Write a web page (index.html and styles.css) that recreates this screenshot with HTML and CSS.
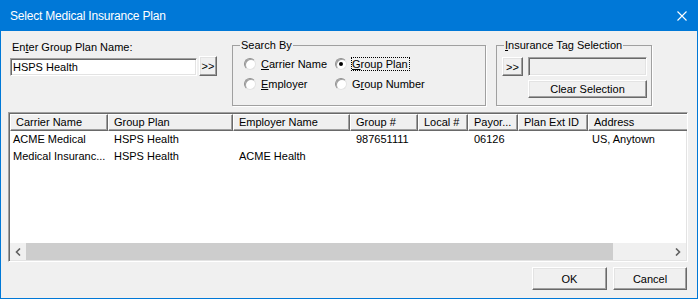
FILE: index.html
```html
<!DOCTYPE html>
<html lang="en">
<head>
    <meta charset="UTF-8">
    <title>Select Medical Insurance Plan</title>
    <link rel="stylesheet" href="styles.css">
</head>
<body>
    <div class="window">
        <div class="titlebar">
            <span class="title">Select Medical Insurance Plan</span>
            <svg class="close" width="10" height="10" viewBox="0 0 10 10">
                <path d="M0.5 0.5 L9.5 9.5 M9.5 0.5 L0.5 9.5" stroke="#fff" stroke-width="1.1" fill="none"/>
            </svg>
        </div>

        <div class="content">
            <!-- top controls -->
            <div class="top">
                <div class="plan">
                    <div class="label">En<u>t</u>er Group Plan Name:</div>
                    <div class="plan-row">
                        <div class="textbox plan-input">HSPS Health</div>
                        <div class="btn btn-go">&gt;&gt;</div>
                    </div>
                </div>

                <fieldset class="group search">
                    <legend>Search By</legend>
                    <div class="radios">
                        <div class="radio"><span class="circle"></span><span class="text"><u>C</u>arrier Name</span></div>
                        <div class="radio"><span class="circle checked"></span><span class="text focus"><u>G</u>roup Plan</span></div>
                        <div class="radio"><span class="circle"></span><span class="text"><u>E</u>mployer</span></div>
                        <div class="radio"><span class="circle"></span><span class="text">G<u>r</u>oup Number</span></div>
                    </div>
                </fieldset>

                <fieldset class="group tags">
                    <legend><u>I</u>nsurance Tag Selection</legend>
                    <div class="tag-grid">
                        <div class="btn btn-tag">&gt;&gt;</div>
                        <div class="textbox disabled"></div>
                        <div class="btn btn-clear">Clear Selection</div>
                    </div>
                </fieldset>
            </div>

            <!-- results list -->
            <div class="list">
                <div class="row header">
                    <div class="cell c1">Carrier Name</div>
                    <div class="cell c2">Group Plan</div>
                    <div class="cell c3">Employer Name</div>
                    <div class="cell c4">Group #</div>
                    <div class="cell c5">Local #</div>
                    <div class="cell c6">Payor...</div>
                    <div class="cell c7">Plan Ext ID</div>
                    <div class="cell c8">Address</div>
                </div>
                <div class="rows">
                    <div class="row item">
                        <div class="cell c1">ACME Medical</div>
                        <div class="cell c2">HSPS Health</div>
                        <div class="cell c3"></div>
                        <div class="cell c4">987651111</div>
                        <div class="cell c5"></div>
                        <div class="cell c6">06126</div>
                        <div class="cell c7"></div>
                        <div class="cell c8">US, Anytown</div>
                    </div>
                    <div class="row item">
                        <div class="cell c1">Medical Insuranc...</div>
                        <div class="cell c2">HSPS Health</div>
                        <div class="cell c3">ACME Health</div>
                        <div class="cell c4"></div>
                        <div class="cell c5"></div>
                        <div class="cell c6"></div>
                        <div class="cell c7"></div>
                        <div class="cell c8"></div>
                    </div>
                </div>
                <div class="hscroll">
                    <div class="arrow">
                        <svg width="6" height="8" viewBox="0 0 6 8"><path d="M5 0.5 L1.5 4 L5 7.5" stroke="#606060" stroke-width="1.6" fill="none"/></svg>
                    </div>
                    <div class="thumb"></div>
                    <div class="track"></div>
                    <div class="arrow">
                        <svg width="6" height="8" viewBox="0 0 6 8"><path d="M1 0.5 L4.5 4 L1 7.5" stroke="#606060" stroke-width="1.6" fill="none"/></svg>
                    </div>
                </div>
            </div>

            <div class="footer">
                <div class="btn btn-ok">OK</div>
                <div class="btn btn-cancel">Cancel</div>
            </div>
        </div>
    </div>
</body>
</html>
```

FILE: styles.css
```css
body {
    margin: 0;
    background-color: #f0f0f0;
    font-family: 'Liberation Sans', Arial, sans-serif;
    font-size: 11px;
    color: #000;
}

.window {
    width: 698px;
    height: 299px;
    box-sizing: border-box;
    border: 1px solid #0078d7;
    border-top: none;
    background-color: #f0f0f0;
    display: flex;
    flex-direction: column;
}

.titlebar {
    height: 31px;
    flex: none;
    background-color: #0078d7;
    color: #fff;
    display: flex;
    align-items: center;
    justify-content: space-between;
    padding: 0 10px 0 9px;
    font-size: 12px;
    letter-spacing: -0.2px;
}

.close {
    display: block;
}

.content {
    flex: 1;
    display: flex;
    flex-direction: column;
    padding: 0 9px 0 7px;
}

/* shared 3d look */
.btn {
    box-sizing: border-box;
    background-color: #f0f0f0;
    border: 1px solid;
    border-color: #fff #696969 #696969 #fff;
    box-shadow: inset -1px -1px #a0a0a0, inset 1px 1px #e3e3e3;
    display: flex;
    align-items: center;
    justify-content: center;
    line-height: 12px;
}

.textbox {
    box-sizing: border-box;
    background-color: #fff;
    border: 1px solid;
    border-color: #a0a0a0 #fff #fff #a0a0a0;
    box-shadow: inset 1px 1px #696969, inset -1px -1px #e3e3e3;
    padding: 0 0 0 2px;
    line-height: 16px;
}

.textbox.disabled {
    background-color: #f0f0f0;
}

.top {
    height: 81px;
    flex: none;
    display: flex;
    align-items: flex-start;
}

.plan {
    margin: 9px 0 0 2px;
}

.label {
    line-height: 14px;
    padding-left: 2px;
}

.plan-row {
    display: flex;
    align-items: flex-end;
    margin-top: 2px;
}

.plan-input {
    width: 187px;
    height: 18px;
    margin-right: 2px;
}

.btn-go {
    width: 18px;
    height: 20px;
}

.group {
    box-sizing: border-box;
    margin: 7px 0 0 0;
    padding: 0;
    min-width: 0;
    height: 68px;
    border: 1px solid #a0a0a0;
    box-shadow: 1px 1px 0 #fff;
}

.group legend {
    margin-left: 7px;
    padding: 0 1px;
    line-height: 14px;
}

.search {
    width: 254px;
    margin-left: 15px;
}

.tags {
    width: 156px;
    margin-left: 10px;
}

.radios {
    display: grid;
    grid-template-columns: 91px 1fr;
    grid-auto-rows: 20px;
    margin: 2px 0 0 11px;
}

.radio {
    display: flex;
    align-items: center;
}

.circle {
    box-sizing: border-box;
    width: 12px;
    height: 12px;
    border-radius: 50%;
    background-color: #fff;
    border: 1px solid;
    border-color: #8f8f8f #e3e3e3 #e3e3e3 #8f8f8f;
    box-shadow: inset 1px 1px #a0a0a0;
    margin-right: 4px;
    display: flex;
    align-items: center;
    justify-content: center;
}

.circle.checked::after {
    content: '';
    width: 4px;
    height: 4px;
    border-radius: 50%;
    background-color: #000;
}

.radio .text {
    border: 1px dotted transparent;
    line-height: 12px;
    padding-right: 1px;
}

.radio .text.focus {
    border-color: #000;
}

.tag-grid {
    display: grid;
    grid-template-columns: 21px 119px;
    grid-template-rows: 19px 18px;
    column-gap: 5px;
    row-gap: 4px;
    margin: 5px 0 0 5px;
}

.btn-clear {
    grid-column: 2;
}

/* list view */
.list {
    box-sizing: border-box;
    height: 150px;
    flex: none;
    background-color: #fff;
    border: 1px solid;
    border-color: #a0a0a0 #fff #fff #a0a0a0;
    box-shadow: inset 1px 1px #696969, inset -1px -1px #e3e3e3;
    padding: 1px;
    display: flex;
    flex-direction: column;
    overflow: hidden;
}

.row {
    display: flex;
    white-space: nowrap;
}

.cell {
    box-sizing: border-box;
    flex: none;
    overflow: hidden;
    padding-left: 6px;
}

.header {
    height: 17px;
    flex: none;
}

.header .cell {
    background-color: #f0f0f0;
    border-top: 1px solid #fff;
    border-left: 1px solid #fff;
    border-right: 1px solid #696969;
    border-bottom: 1px solid #696969;
    box-shadow: inset -1px -1px #a0a0a0;
    padding-left: 5px;
    line-height: 14px;
}

.item {
    height: 17px;
    line-height: 17px;
}

.item .c1 {
    padding-left: 3px;
}

.c1 { width: 98px; }
.c2 { width: 125px; }
.c3 { width: 117px; }
.c4 { width: 68px; }
.c5 { width: 50px; }
.c6 { width: 50px; }
.c7 { width: 70px; }
.c8 { width: 130px; }

.item .c8 {
    padding-left: 4px;
}

.rows {
    flex: 1;
}

.hscroll {
    height: 17px;
    flex: none;
    display: flex;
    background-color: #f0f0f0;
}

.arrow {
    width: 16px;
    display: flex;
    align-items: center;
    justify-content: center;
}

.thumb {
    width: 587px;
    background-color: #cdcdcd;
}

.track {
    flex: 1;
}

.footer {
    display: flex;
    justify-content: flex-end;
    gap: 6px;
    padding: 5px 1px 0 0;
}

.btn-ok {
    width: 75px;
    height: 23px;
}

.btn-cancel {
    width: 74px;
    height: 23px;
}
```
